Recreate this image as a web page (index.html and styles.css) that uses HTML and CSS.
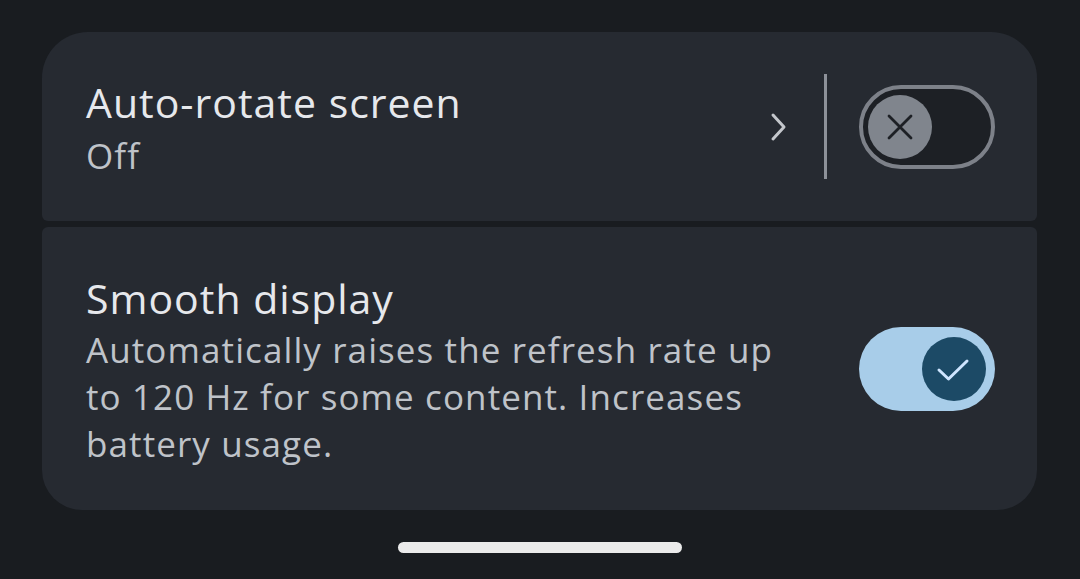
FILE: index.html
```html
<!DOCTYPE html>
<html lang="en">
<head>
    <meta charset="UTF-8">
    <meta name="viewport" content="width=device-width, initial-scale=1.0">
    <title>Display settings</title>
    <link rel="stylesheet" href="styles.css">
</head>
<body>
    <div class="screen">
        <div class="group">
            <div class="item item-top">
                <div class="text">
                    <div class="title">Auto-rotate screen</div>
                    <div class="summary">Off</div>
                </div>
                <svg class="chevron" width="20" height="30" viewBox="0 0 20 30">
                    <path d="M5 3 L16 15 L5 27" fill="none" stroke="#c4c7cc" stroke-width="3" stroke-linecap="round" stroke-linejoin="round"/>
                </svg>
                <div class="divider"></div>
                <div class="switch switch-off">
                    <div class="thumb">
                        <svg width="26" height="26" viewBox="0 0 26 26">
                            <path d="M2 2 L24 24 M24 2 L2 24" stroke="#1d2025" stroke-width="2.8" stroke-linecap="round"/>
                        </svg>
                    </div>
                </div>
            </div>
            <div class="item item-bottom">
                <div class="text">
                    <div class="title">Smooth display</div>
                    <div class="summary">Automatically raises the refresh rate up to 120 Hz for some content. Increases battery usage.</div>
                </div>
                <div class="switch switch-on">
                    <div class="thumb">
                        <svg width="36" height="36" viewBox="0 0 36 36">
                            <path d="M3 19 L12.5 28 L31 10" fill="none" stroke="#cfe5ff" stroke-width="3" stroke-linecap="round" stroke-linejoin="round"/>
                        </svg>
                    </div>
                </div>
            </div>
        </div>
        <div class="home-bar"></div>
    </div>
</body>
</html>
```

FILE: styles.css
```css
body {
    margin: 0;
    background-color: #191c20;
    font-family: "Open Sans", Roboto, sans-serif;
}
.screen {
    width: 1080px;
    height: 579px;
    padding: 32px 43px 0 42px;
    box-sizing: border-box;
    display: flex;
    flex-direction: column;
}
.group {
    display: flex;
    flex-direction: column;
    gap: 6px;
}
.item {
    background-color: #262a31;
    display: flex;
    align-items: center;
    padding: 0 42px 0 44px;
}
.item-top {
    height: 189px;
    border-radius: 46px 46px 6px 6px;
}
.item-bottom {
    height: 283px;
    border-radius: 6px 6px 40px 40px;
}
.text {
    flex: 1;
    margin-top: 4px;
}
.item-top .summary {
    margin-top: 6px;
}
.title {
    color: #e6e8ec;
    font-size: 41px;
    line-height: 48px;
    font-weight: 500;
    letter-spacing: 1px;
}
.summary {
    color: #bfc3c9;
    font-size: 35px;
    line-height: 47px;
    letter-spacing: 1.1px;
    max-width: 712px;
    margin-top: 4px;
}
.chevron {
    margin-right: 36px;
}
.divider {
    width: 3px;
    height: 105px;
    background-color: #8d9199;
    margin-right: 32px;
}
.switch {
    width: 136px;
    height: 84px;
    border-radius: 42px;
    box-sizing: border-box;
    display: flex;
    align-items: center;
    padding: 0 9px;
}
.switch-off {
    border: 4px solid #7d8189;
    background-color: #1d2025;
    padding: 0 5px;
}
.switch-on {
    background-color: #a8cde9;
    justify-content: flex-end;
}
.thumb {
    width: 64px;
    height: 64px;
    border-radius: 50%;
    display: flex;
    align-items: center;
    justify-content: center;
}
.switch-off .thumb {
    background-color: #80858d;
}
.switch-on .thumb {
    background-color: #1c4a66;
}
.home-bar {
    width: 284px;
    height: 11px;
    border-radius: 6px;
    background-color: #ebebeb;
    margin: 32px auto 0;
}
```
